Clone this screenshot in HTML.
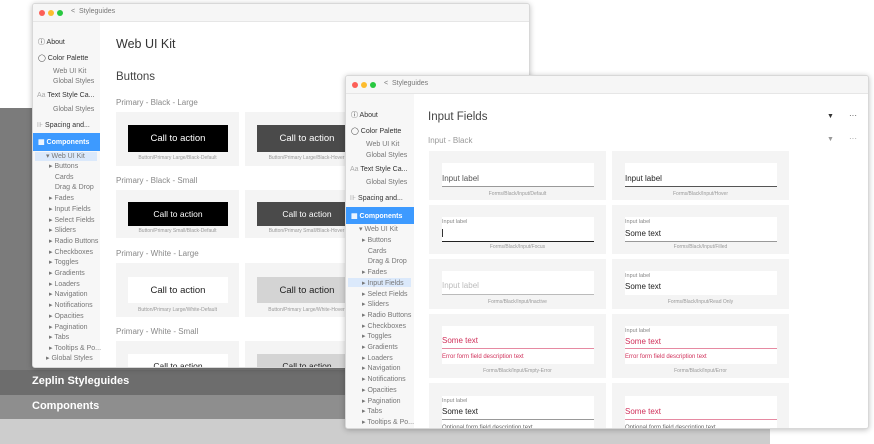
<!DOCTYPE html>
<html><head><meta charset="utf-8"><style>
*{margin:0;padding:0;box-sizing:border-box}
body{width:874px;height:444px;overflow:hidden;background:#fff;font-family:"Liberation Sans",sans-serif;position:relative}
.a{position:absolute;white-space:nowrap}
.win{position:absolute;background:#fff;border:1px solid #d8d8d8;box-shadow:0 1px 6px rgba(0,0,0,.25);overflow:hidden;border-radius:3px}
.tb{position:absolute;left:0;top:0;right:0;height:18px;background:#f6f6f6;border-bottom:1px solid #e6e6e6}
.dot{position:absolute;top:6px;width:6px;height:6px;border-radius:50%}
.sb{position:absolute;left:0;top:18px;bottom:0;background:#f7f7f7}
.si{position:absolute;font-size:7px;color:#333;white-space:nowrap}
.sg{color:#777}
.card{position:absolute;background:#f4f4f4}
.cap{position:absolute;font-size:5px;color:#999;white-space:nowrap;text-align:center}
.btn{position:absolute;display:flex;align-items:center;justify-content:center;font-size:9.5px;color:#fff}
.inp{position:absolute;background:#fff;width:152px}
</style></head><body>
<div class="a" style="left:0;top:108px;width:770px;height:262px;background:#7b7b7b"></div>
<div class="a" style="left:0;top:370px;width:770px;height:25px;background:#6d6d6d"></div>
<div class="a" style="left:0;top:395px;width:770px;height:24px;background:#8e8e8e"></div>
<div class="a" style="left:0;top:419px;width:770px;height:25px;background:#cdcdcd"></div>
<div class="a" style="left:32px;top:375px;font-size:11px;color:#fff;font-weight:bold">Zeplin Styleguides</div>
<div class="a" style="left:32px;top:400px;font-size:11px;color:#fff;font-weight:bold">Components</div>

<div class="win" style="left:32px;top:3px;width:498px;height:365px">
<div class="tb"><div class="dot" style="left:6px;background:#fc5f57"></div><div class="dot" style="left:15px;background:#fdbc2e"></div><div class="dot" style="left:24px;background:#28c840"></div><div class="a" style="left:38px;top:4px;font-size:7px;color:#777">&lt;&nbsp; Styleguides</div></div>
<div class="sb" style="width:67px">
<div class="si" style="left:5px;top:15px">ⓘ About</div>
<div class="si" style="left:5px;top:32px">◯ Color Palette</div>
<div class="si sg" style="left:20px;top:46px">Web UI Kit</div>
<div class="si sg" style="left:20px;top:56px">Global Styles</div>
<div class="si" style="left:4px;top:70px"><span style="color:#aaa">Aa</span> Text Style Ca...</div>
<div class="si sg" style="left:20px;top:84px">Global Styles</div>
<div class="si" style="left:4px;top:99px"><span style="color:#aaa">⊪</span> Spacing and...</div>
<div class="a" style="left:0;top:111px;width:67px;height:18px;background:#3d9aff"></div>
<div class="si" style="left:5px;top:116px;color:#fff;font-weight:bold">▦ Components</div>
<div class="a" style="left:2px;top:130px;width:62px;height:9px;background:#dbe9fb"></div>
<div class="si sg" style="left:13px;top:130px">▾ Web UI Kit</div>
<div class="si sg" style="left:16px;top:140px;line-height:10.7px">▸ Buttons<br>&nbsp;&nbsp; Cards<br>&nbsp;&nbsp; Drag &amp; Drop<br>▸ Fades<br>▸ Input Fields<br>▸ Select Fields<br>▸ Sliders<br>▸ Radio Buttons<br>▸ Checkboxes<br>▸ Toggles<br>▸ Gradients<br>▸ Loaders<br>▸ Navigation<br>▸ Notifications<br>▸ Opacities<br>▸ Pagination<br>▸ Tabs<br>▸ Tooltips &amp; Po...</div>
<div class="si sg" style="left:13px;top:332px">▸ Global Styles</div>
</div>
<div class="a" style="left:83px;top:33px;font-size:12.5px;color:#333">Web UI Kit</div>
<div class="a" style="left:83px;top:67px;font-size:11.5px;color:#444">Buttons</div>
<div class="a" style="left:83px;top:94px;font-size:8px;color:#888">Primary - Black - Large</div>
<div class="card" style="left:83px;top:108px;width:123px;height:54px"></div>
<div class="card" style="left:212px;top:108px;width:123px;height:54px"></div>
<div class="btn" style="left:95px;top:121px;width:100px;height:27px;background:#000">Call to action</div>
<div class="btn" style="left:224px;top:121px;width:100px;height:27px;background:#4a4a4a">Call to action</div>
<div class="cap" style="left:83px;top:151px;width:123px">Button/Primary Large/Black-Default</div>
<div class="cap" style="left:212px;top:151px;width:123px">Button/Primary Large/Black-Hover</div>
<div class="a" style="left:83px;top:172px;font-size:8px;color:#888">Primary - Black - Small</div>
<div class="card" style="left:83px;top:186px;width:123px;height:48px"></div>
<div class="card" style="left:212px;top:186px;width:123px;height:48px"></div>
<div class="btn" style="left:95px;top:198px;width:100px;height:24px;background:#000;font-size:8.5px">Call to action</div>
<div class="btn" style="left:224px;top:198px;width:100px;height:24px;background:#4a4a4a;font-size:8.5px">Call to action</div>
<div class="cap" style="left:83px;top:224px;width:123px">Button/Primary Small/Black-Default</div>
<div class="cap" style="left:212px;top:224px;width:123px">Button/Primary Small/Black-Hover</div>
<div class="a" style="left:83px;top:245px;font-size:8px;color:#888">Primary - White - Large</div>
<div class="card" style="left:83px;top:259px;width:123px;height:54px"></div>
<div class="card" style="left:212px;top:259px;width:123px;height:54px"></div>
<div class="btn" style="left:95px;top:273px;width:100px;height:26px;background:#fff;color:#222">Call to action</div>
<div class="btn" style="left:224px;top:273px;width:100px;height:26px;background:#d4d4d4;color:#222">Call to action</div>
<div class="cap" style="left:83px;top:303px;width:123px">Button/Primary Large/White-Default</div>
<div class="cap" style="left:212px;top:303px;width:123px">Button/Primary Large/White-Hover</div>
<div class="a" style="left:83px;top:323px;font-size:8px;color:#888">Primary - White - Small</div>
<div class="card" style="left:83px;top:337px;width:123px;height:40px"></div>
<div class="card" style="left:212px;top:337px;width:123px;height:40px"></div>
<div class="btn" style="left:95px;top:350px;width:100px;height:24px;background:#fff;color:#222;font-size:8.5px">Call to action</div>
<div class="btn" style="left:224px;top:350px;width:100px;height:24px;background:#d4d4d4;color:#222;font-size:8.5px">Call to action</div>
</div>

<div class="win" style="left:345px;top:75px;width:524px;height:354px">
<div class="tb"><div class="dot" style="left:6px;background:#fc5f57"></div><div class="dot" style="left:15px;background:#fdbc2e"></div><div class="dot" style="left:24px;background:#28c840"></div><div class="a" style="left:38px;top:4px;font-size:7px;color:#777">&lt;&nbsp; Styleguides</div></div>
<div class="sb" style="width:68px">
<div class="si" style="left:5px;top:16px">ⓘ About</div>
<div class="si" style="left:5px;top:33px">◯ Color Palette</div>
<div class="si sg" style="left:20px;top:47px">Web UI Kit</div>
<div class="si sg" style="left:20px;top:58px">Global Styles</div>
<div class="si" style="left:4px;top:72px"><span style="color:#aaa">Aa</span> Text Style Ca...</div>
<div class="si sg" style="left:20px;top:85px">Global Styles</div>
<div class="si" style="left:4px;top:100px"><span style="color:#aaa">⊪</span> Spacing and...</div>
<div class="a" style="left:0;top:113px;width:68px;height:17px;background:#3d9aff"></div>
<div class="si" style="left:5px;top:118px;color:#fff;font-weight:bold">▦ Components</div>
<div class="si sg" style="left:13px;top:131px">▾ Web UI Kit</div>
<div class="a" style="left:2px;top:184px;width:63px;height:9px;background:#dbe9fb"></div>
<div class="si sg" style="left:16px;top:142px;line-height:10.7px">▸ Buttons<br>&nbsp;&nbsp; Cards<br>&nbsp;&nbsp; Drag &amp; Drop<br>▸ Fades<br>▸ Input Fields<br>▸ Select Fields<br>▸ Sliders<br>▸ Radio Buttons<br>▸ Checkboxes<br>▸ Toggles<br>▸ Gradients<br>▸ Loaders<br>▸ Navigation<br>▸ Notifications<br>▸ Opacities<br>▸ Pagination<br>▸ Tabs<br>▸ Tooltips &amp; Po...</div>
</div>
<div class="a" style="left:82px;top:35px;font-size:11.5px;color:#444">Input Fields</div>
<div class="a" style="left:82px;top:60px;font-size:8px;color:#999">Input - Black</div>
<div class="a" style="left:481px;top:37px;font-size:7px;color:#333">▼</div>
<div class="a" style="left:503px;top:35px;font-size:8px;color:#444">···</div>
<div class="a" style="left:481px;top:60px;font-size:7px;color:#999">▼</div>
<div class="a" style="left:503px;top:58px;font-size:8px;color:#999">···</div>

<div class="card" style="left:83px;top:75px;width:177px;height:49px"></div>
<div class="card" style="left:266px;top:75px;width:177px;height:49px"></div>
<div class="card" style="left:83px;top:129px;width:177px;height:49px"></div>
<div class="card" style="left:266px;top:129px;width:177px;height:49px"></div>
<div class="card" style="left:83px;top:183px;width:177px;height:50px"></div>
<div class="card" style="left:266px;top:183px;width:177px;height:50px"></div>
<div class="card" style="left:83px;top:238px;width:177px;height:64px"></div>
<div class="card" style="left:266px;top:238px;width:177px;height:64px"></div>
<div class="card" style="left:83px;top:307px;width:177px;height:50px"></div>
<div class="card" style="left:266px;top:307px;width:177px;height:50px"></div>

<div class="inp" style="left:96px;top:87px;height:24px;border-bottom:1px solid #999"><div class="a" style="left:0;top:11px;font-size:8px;color:#555">Input label</div></div>
<div class="cap" style="left:83px;top:115px;width:177px">Forms/Black/Input/Default</div>
<div class="inp" style="left:279px;top:87px;height:24px;border-bottom:1px solid #555"><div class="a" style="left:0;top:11px;font-size:8px;color:#222">Input label</div></div>
<div class="cap" style="left:266px;top:115px;width:177px">Forms/Black/Input/Hover</div>
<div class="inp" style="left:96px;top:141px;height:25px;border-bottom:1.5px solid #222"><div class="a" style="left:0;top:2px;font-size:5.5px;color:#888">Input label</div><div class="a" style="left:0;top:12px;width:1px;height:8px;background:#333"></div></div>
<div class="cap" style="left:83px;top:168px;width:177px">Forms/Black/Input/Focus</div>
<div class="inp" style="left:279px;top:141px;height:25px;border-bottom:1px solid #999"><div class="a" style="left:0;top:2px;font-size:5.5px;color:#888">Input label</div><div class="a" style="left:0;top:12px;font-size:8px;color:#222">Some text</div></div>
<div class="cap" style="left:266px;top:168px;width:177px">Forms/Black/Input/Filled</div>
<div class="inp" style="left:96px;top:195px;height:24px;border-bottom:1px solid #bbb"><div class="a" style="left:0;top:10px;font-size:8px;color:#bbb">Input label</div></div>
<div class="cap" style="left:83px;top:223px;width:177px">Forms/Black/Input/Inactive</div>
<div class="inp" style="left:279px;top:195px;height:24px"><div class="a" style="left:0;top:2px;font-size:5.5px;color:#888">Input label</div><div class="a" style="left:0;top:11px;font-size:8px;color:#222">Some text</div></div>
<div class="cap" style="left:266px;top:223px;width:177px">Forms/Black/Input/Read Only</div>
<div class="inp" style="left:96px;top:250px;height:38px"><div class="a" style="left:0;top:10px;font-size:8px;color:#d0305a">Some text</div><div class="a" style="left:0;top:22px;width:152px;height:1px;background:#e68aa2"></div><div class="a" style="left:0;top:28px;font-size:6px;color:#d0305a">Error form field description text</div></div>
<div class="cap" style="left:83px;top:292px;width:177px">Forms/Black/Input/Empty-Error</div>
<div class="inp" style="left:279px;top:250px;height:38px"><div class="a" style="left:0;top:2px;font-size:5.5px;color:#888">Input label</div><div class="a" style="left:0;top:11px;font-size:8px;color:#d0305a">Some text</div><div class="a" style="left:0;top:22px;width:152px;height:1px;background:#e68aa2"></div><div class="a" style="left:0;top:28px;font-size:6px;color:#d0305a">Error form field description text</div></div>
<div class="cap" style="left:266px;top:292px;width:177px">Forms/Black/Input/Error</div>
<div class="inp" style="left:96px;top:320px;height:40px"><div class="a" style="left:0;top:2px;font-size:5.5px;color:#888">Input label</div><div class="a" style="left:0;top:11px;font-size:8px;color:#222">Some text</div><div class="a" style="left:0;top:23px;width:152px;height:1px;background:#999"></div><div class="a" style="left:0;top:29px;font-size:6px;color:#666">Optional form field description text</div></div>
<div class="inp" style="left:279px;top:320px;height:40px"><div class="a" style="left:0;top:11px;font-size:8px;color:#d0305a">Some text</div><div class="a" style="left:0;top:23px;width:152px;height:1px;background:#e68aa2"></div><div class="a" style="left:0;top:29px;font-size:6px;color:#666">Optional form field description text</div></div>
</div>
</body></html>
